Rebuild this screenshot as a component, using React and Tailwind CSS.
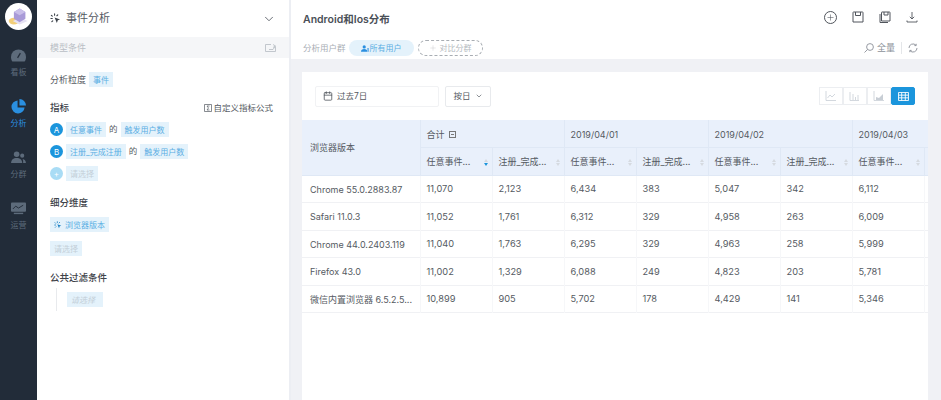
import { ChevronDown, Plus, Calendar } from "lucide-react";

const font = "font-['Inter','Noto_Sans_CJK_SC',sans-serif]";

const rows = [
  ["Chrome 55.0.2883.87", "11,070", "2,123", "6,434", "383", "5,047", "342", "6,112"],
  ["Safari 11.0.3", "11,052", "1,761", "6,312", "329", "4,958", "263", "6,009"],
  ["Chrome 44.0.2403.119", "11,040", "1,763", "6,295", "329", "4,963", "258", "5,999"],
  ["Firefox 43.0", "11,002", "1,329", "6,088", "249", "4,823", "203", "5,781"],
  ["微信内置浏览器 6.5.2.5...", "10,899", "905", "5,702", "178", "4,429", "141", "5,346"],
];

function Sparkle({ className }) {
  return (
    <svg viewBox="0 0 12 12" className={className} fill="none" stroke="currentColor" strokeWidth="1.2" strokeLinecap="round">
      <path d="M5 1v1.500M1.500 2.500l1 1M1 6h1.500M2 9.500l1-1M8.500 2l-1 1" />
      <path d="M5 5l6 2-2.500 1L7.500 11z" fill="currentColor" stroke="none" />
    </svg>
  );
}

function Tag({ children, muted, className = "" }) {
  return (
    <span
      className={
        "inline-flex h-[15px] items-center whitespace-nowrap bg-[#e4f2fb] px-[4px] text-[8px] " +
        (muted ? "text-[#c3cfd8] " : "text-[#5aaee3] ") +
        className
      }
    >
      {children}
    </span>
  );
}

function Badge({ children, muted }) {
  return (
    <span
      className={
        "flex h-[13px] w-[13px] shrink-0 items-center justify-center rounded-full text-[8px] text-white " +
        (muted ? "bg-[#a9dcf5]" : "bg-[#1b95dc]")
      }
    >
      {children}
    </span>
  );
}

function NavItem({ label, active, children }) {
  return (
    <div className={"flex flex-col items-center gap-[3px] " + (active ? "text-[#2a8fe0]" : "text-[#5d6b7b]")}>
      <span className="flex h-[15px] items-center">{children}</span>
      <span className="text-[8px] leading-[12px]">{label}</span>
    </div>
  );
}

function SortIcon({ active }) {
  return (
    <span className="flex shrink-0 flex-col gap-[1px]">
      <span className="h-0 w-0 border-x-[2px] border-b-[3px] border-x-transparent border-b-[#d5dae0]" />
      <span className={"h-0 w-0 border-x-[2px] border-t-[3px] border-x-transparent " + (active ? "border-t-[#1b95dc]" : "border-t-[#d5dae0]")} />
    </span>
  );
}

function MetricHead({ label, active }) {
  return (
    <th className="h-[28px] w-[72px] border-b border-l border-[#dfe8f5] pl-[6px] pr-[4px] pt-[2px] text-left font-normal">
      <div className="flex items-center justify-between">
        <span className="whitespace-nowrap text-[9px]">{label}</span>
        <SortIcon active={active} />
      </div>
    </th>
  );
}

function ChartBtn({ active, children }) {
  return (
    <span
      className={
        "flex h-[18px] w-[24px] items-center justify-center border " +
        (active ? "rounded-[2px] border-[#1b95dc] bg-[#1b95dc] text-white" : "border-[#eceef1] text-[#c8ced5]")
      }
    >
      {children}
    </span>
  );
}

function SaveIcon() {
  return (
    <svg viewBox="0 0 12 12" className="h-[12px] w-[12px]" fill="none" stroke="currentColor" strokeWidth="1">
      <path d="M1.500 1h9a.5.5 0 0 1 .5.500V11H1V1.500a.5.5 0 0 1 .5-.5z" />
      <path d="M3.500 1v3.500h5V1" />
    </svg>
  );
}

function SaveStackIcon() {
  return (
    <svg viewBox="0 0 12 12" className="h-[12px] w-[12px]" fill="none" stroke="currentColor" strokeWidth="1">
      <path d="M3 1h7.500a.5.5 0 0 1 .5.500V10H2.500V1.500A.5.5 0 0 1 3 1z" />
      <path d="M5 1v3h4V1" />
      <path d="M1 3v8.500h8" />
    </svg>
  );
}

function TrayDownIcon() {
  return (
    <svg viewBox="0 0 12 12" className="h-[12px] w-[12px]" fill="none" stroke="currentColor" strokeWidth="0.9">
      <path d="M6 1v7M3.800 5.800L6 8l2.200-2.200" />
      <path d="M1 9.500V11h10V9.500" />
    </svg>
  );
}

export default function App() {
  return (
    <div className={"flex h-[400px] w-[941px] overflow-hidden bg-white text-[#555a62] " + font}>
      <aside className="flex w-[37px] shrink-0 flex-col items-center bg-[#222c39] pt-[3px]">
        <div className="flex h-[27px] w-[27px] items-center justify-center rounded-full bg-white">
          <svg viewBox="0 0 20 20" className="h-[23px] w-[23px]">
            <ellipse cx="6" cy="14" rx="4.500" ry="3" fill="#f3cf7a" />
            <path d="M5 14l6 3 7-3-6-3z" fill="#e6e2f3" />
            <path d="M6 6l5-3 5 3v6l-5 3-5-3z" fill="#a99bd8" />
            <path d="M6 6l5 3 5-3-5-3z" fill="#c9bfe9" />
          </svg>
        </div>
        <div className="mt-[18px] flex flex-col items-center gap-[21px]">
          <NavItem label="看板">
            <svg viewBox="0 0 16 13" className="h-[13px] w-[15px]">
              <path d="M8 0a8 8 0 0 0-8 8c0 2 .6 3.500 1.500 5h13c.9-1.500 1.500-3 1.500-5a8 8 0 0 0-8-8z" fill="#5d6b7b" />
              <path d="M7 9l3-5" stroke="#222c39" strokeWidth="1.300" />
            </svg>
          </NavItem>
          <NavItem label="分析" active>
            <svg viewBox="0 0 16 16" className="h-[15px] w-[15px]">
              <path d="M7 1.500a7 7 0 1 0 7.500 7.500H7z" fill="#2a8fe0" />
              <path d="M9 0v7h7a7 7 0 0 0-7-7z" fill="#2a8fe0" />
            </svg>
          </NavItem>
          <NavItem label="分群">
            <svg viewBox="0 0 16 14" className="h-[13px] w-[15px]" fill="#5d6b7b">
              <circle cx="6" cy="3.500" r="3" />
              <path d="M0 13c0-3.500 2.500-5.500 6-5.500s6 2 6 5.500z" />
              <circle cx="12" cy="5" r="2.200" />
              <path d="M13 13h3c0-2.500-1.500-4-3.500-4.300C13 10 13.200 11.500 13 13z" />
            </svg>
          </NavItem>
          <NavItem label="运营">
            <svg viewBox="0 0 16 13" className="h-[13px] w-[15px]">
              <rect x="0" y="0" width="16" height="10" rx="1" fill="#5d6b7b" />
              <path d="M2 7l3-3 3 2 5-3" stroke="#222c39" strokeWidth="1" fill="none" />
              <rect x="3" y="11" width="10" height="1.500" fill="#5d6b7b" />
            </svg>
          </NavItem>
        </div>
      </aside>

      <section className="flex w-[252px] shrink-0 flex-col">
        <div className="flex h-[37px] items-center justify-between px-[13px]">
          <div className="flex items-center gap-[5px]">
            <Sparkle className="h-[11px] w-[11px] text-[#3b4149]" />
            <span className="text-[11px] text-[#555a62]">事件分析</span>
          </div>
          <ChevronDown className="h-[14px] w-[14px] text-[#555a62]" strokeWidth={1.5} />
        </div>
        <div className="flex h-[21px] items-center justify-between bg-[#f5f6f8] px-[13px]">
          <span className="text-[9px] text-[#b9bec5]">模型条件</span>
          <svg viewBox="0 0 11 8" className="h-[8px] w-[11px] text-[#b5bbc2]" fill="none" stroke="currentColor" strokeWidth="0.8">
            <path d="M6 .5H.5v7h10V3M4 5.500h4L10.500 2M8 .5l2.500 1.500L8 3.500" />
          </svg>
        </div>

        <div className="flex flex-col px-[13px]">
          <div className="mt-[14px] flex items-center gap-[3px] text-[9px]">
            <span>分析粒度</span>
            <Tag>事件</Tag>
          </div>

          <div className="mt-[14px] flex h-[14px] items-center justify-between">
            <span className="text-[9.5px] font-medium text-[#3e434a]">指标</span>
            <span className="mr-[3px] flex items-center gap-[1px] text-[8.5px]">
              <svg viewBox="0 0 8 8" className="h-[8px] w-[8px]" fill="none" stroke="currentColor" strokeWidth="0.7">
                <path d="M.5.5h7v7h-7zM5.500 2H3l1.500 2L3 6h2.500" />
              </svg>
              自定义指标公式
            </span>
          </div>
          <div className="mt-[7px] flex flex-col gap-[7px]">
            <div className="flex items-center gap-[3px] text-[8.5px]">
              <Badge>A</Badge>
              <Tag>任意事件</Tag>
              <span>的</span>
              <Tag>触发用户数</Tag>
            </div>
            <div className="flex items-center gap-[3px] text-[8.5px]">
              <Badge>B</Badge>
              <Tag>注册_完成注册</Tag>
              <span>的</span>
              <Tag>触发用户数</Tag>
            </div>
            <div className="flex items-center gap-[3px]">
              <Badge muted>+</Badge>
              <Tag muted>请选择</Tag>
            </div>
          </div>

          <div className="mt-[15px] text-[9.5px] font-medium leading-[14px] text-[#3e434a]">细分维度</div>
          <div className="mt-[7px] flex">
            <Tag>
              <Sparkle className="mr-[3px] h-[8px] w-[8px] text-[#1b80c4]" />
              浏览器版本
            </Tag>
          </div>
          <div className="mt-[9px] flex">
            <Tag muted>请选择</Tag>
          </div>

          <div className="mt-[15px] text-[9.5px] font-medium leading-[14px] text-[#3e434a]">公共过滤条件</div>
          <div className="ml-[6px] mt-[3px] flex h-[23px] items-center border-l border-[#e8eaed] pl-[10px]">
            <Tag muted className="w-[36px] italic">请选择</Tag>
          </div>
        </div>
      </section>

      <main className="flex min-w-0 flex-1 flex-col border-l-2 border-[#eceef3]">
        <header className="h-[59px] shrink-0 bg-white pl-[12px] pr-[23px]">
          <div className="flex h-[40px] items-center justify-between">
            <span className="text-[10.5px] font-semibold text-[#4a4f57]">Android和Ios分布</span>
            <div className="mb-[6px] flex items-center gap-[15px] text-[#50555c]">
              <span className="flex h-[13px] w-[13px] items-center justify-center rounded-full border border-[#50555c]">
                <Plus className="h-[9px] w-[9px]" strokeWidth={1.5} />
              </span>
              <SaveIcon />
              <SaveStackIcon />
              <TrayDownIcon />
            </div>
          </div>
          <div className="flex items-center justify-between">
            <div className="flex items-center gap-[3px] text-[8px]">
              <span className="text-[8.5px] text-[#a9aeb5]">分析用户群</span>
              <span className="flex h-[16px] w-[65px] items-center justify-center gap-[1px] rounded-full bg-[#e4f2fb] text-[#5aaee3]">
                <svg viewBox="0 0 10 8" className="h-[7px] w-[8px]" fill="#2a8fe0">
                  <circle cx="4" cy="2" r="2" />
                  <path d="M0 8c0-2.500 1.500-3.500 4-3.500S8 5.500 8 8zM8 3.500h1.500V8H8.500z" />
                </svg>
                所有用户
              </span>
              <span className="ml-[1px] flex h-[16px] w-[65px] items-center justify-center gap-[3px] rounded-full border border-dashed border-[#a8adb3] text-[#b5bac0]">
                <Plus className="h-[8px] w-[8px]" strokeWidth={1} />
                对比分群
              </span>
            </div>
            <div className="flex items-center text-[9px] text-[#8b9098]">
              <svg viewBox="0 0 10 10" className="h-[10px] w-[10px]" fill="none" stroke="currentColor" strokeWidth="0.9">
                <circle cx="6" cy="4" r="3.400" />
                <path d="M3.500 6.500L.5 9.500" />
              </svg>
              <span className="ml-[3px]">全量</span>
              <span className="mx-[6px] h-[12px] w-px bg-[#e4e6e9]" />
              <svg viewBox="0 0 10 10" className="h-[10px] w-[10px]" fill="none" stroke="currentColor" strokeWidth="0.9">
                <path d="M1 5a4 4 0 0 1 7-2.700M9 5a4 4 0 0 1-7 2.700" />
                <path d="M8.200.8v1.800H6.400M1.800 9.200V7.400h1.800" />
              </svg>
            </div>
          </div>
        </header>

        <div className="min-h-0 flex-1 bg-[#f0f1f5] pl-[11px] pr-[13px] pt-[13px]">
          <div className="h-full overflow-hidden bg-white">
            <div className="flex h-[48px] items-center justify-between px-[13px]">
              <div className="flex items-center gap-[6px] text-[8.5px]">
                <span className="flex h-[21px] w-[124px] items-center gap-[4px] rounded-[2px] border border-[#f1f2f4] pl-[7px]">
                  <Calendar className="h-[10px] w-[10px]" />
                  过去7日
                </span>
                <span className="flex h-[21px] w-[46px] items-center justify-center gap-[4px] rounded-[2px] border border-[#e8eaed]">
                  按日
                  <ChevronDown className="h-[8px] w-[8px]" />
                </span>
              </div>
              <div className="flex">
                <ChartBtn>
                  <svg viewBox="0 0 12 10" className="h-[10px] w-[12px]" fill="none" stroke="currentColor" strokeWidth="0.8"><path d="M1 0v9.500h10M2.500 7l2.500-3 2 2 3-3" /></svg>
                </ChartBtn>
                <ChartBtn>
                  <svg viewBox="0 0 12 10" className="h-[10px] w-[12px]" fill="none" stroke="currentColor" strokeWidth="0.8"><path d="M1 1v8.500h9M4 9V3M6.500 9V6M9 9V4" /></svg>
                </ChartBtn>
                <ChartBtn>
                  <svg viewBox="0 0 12 10" className="h-[10px] w-[12px]" fill="none" stroke="currentColor" strokeWidth="0.8"><path d="M1 0v9.500h10" /><path d="M3 9V6l3 1 4-4v6z" fill="currentColor" stroke="none" /></svg>
                </ChartBtn>
                <ChartBtn active>
                  <svg viewBox="0 0 12 10" className="h-[9px] w-[11px]" fill="none" stroke="currentColor" strokeWidth="1"><path d="M.5.5h11v9H.5zM.5 3.500h11M.5 6.500h11M4 .5v9M8 .5v9" /></svg>
                </ChartBtn>
              </div>
            </div>

            <table className="w-[626px] table-fixed border-collapse text-[9px] text-[#555a62]">
              <thead className="bg-[#e9f0fb]">
                <tr>
                  <th rowSpan={2} className="w-[118px] border-b border-[#dfe8f5] pl-[8px] pt-[1px] text-left font-normal">浏览器版本</th>
                  <th colSpan={2} className="h-[27px] w-[144px] border-b border-l border-[#dfe8f5] pl-[6px] pt-[2px] text-left font-normal">
                    <span className="flex items-center gap-[4px]">
                      合计
                      <span className="flex h-[7px] w-[7px] items-center justify-center border border-[#777]">
                        <span className="h-px w-[3px] bg-[#777]" />
                      </span>
                    </span>
                  </th>
                  <th colSpan={2} className="w-[144px] border-b border-l border-[#dfe8f5] pl-[6px] pt-[2px] text-left font-normal">2019/04/01</th>
                  <th colSpan={2} className="w-[144px] border-b border-l border-[#dfe8f5] pl-[6px] pt-[2px] text-left font-normal">2019/04/02</th>
                  <th className="w-[72px] whitespace-nowrap border-b border-l border-[#dfe8f5] pl-[6px] pt-[2px] text-left font-normal">2019/04/03</th>
                  <th className="w-[4px] border-b border-[#dfe8f5]" />
                </tr>
                <tr>
                  <MetricHead label="任意事件..." active />
                  <MetricHead label="注册_完成..." />
                  <MetricHead label="任意事件..." />
                  <MetricHead label="注册_完成..." />
                  <MetricHead label="任意事件..." />
                  <MetricHead label="注册_完成..." />
                  <MetricHead label="任意事件..." />
                  <th className="border-b border-l border-[#dfe8f5]" />
                </tr>
              </thead>
              <tbody>
                {rows.map((row) => (
                  <tr key={row[0]} className="h-[27.5px] border-b border-[#f0f1f4]">
                    {row.map((cell, i) => (
                      <td
                        key={i}
                        className={"whitespace-nowrap pt-[1px] " + (i > 0 ? "border-l border-[#f6f7f9] pl-[6px] text-[9.25px]" : "pl-[8px] text-[9px]")}
                      >
                        {cell}
                      </td>
                    ))}
                    <td className="border-l border-[#f6f7f9]" />
                  </tr>
                ))}
              </tbody>
            </table>
          </div>
        </div>
      </main>
    </div>
  );
}
